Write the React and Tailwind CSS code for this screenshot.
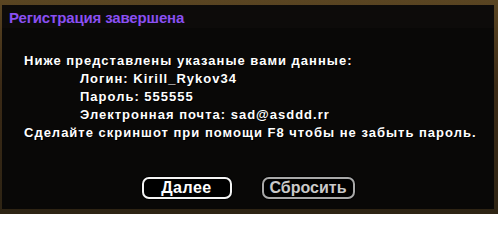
export default function App() {
  const font = { fontFamily: '"Liberation Sans", Arial, sans-serif' };
  return (
    <div
      className="w-[498px] h-[214px] overflow-hidden bg-[linear-gradient(180deg,#5a4522_0%,#3b2a16_40%,#2e2414_100%)] pt-[5px] pl-[2px] pr-[4px] pb-[5px] flex"
      style={font}
    >
      <div className="flex-1 flex flex-col bg-[#0a0908]">
        <div className="h-[23px] bg-[#0d0b0a] pl-[7px] flex items-center">
          <span className="text-[15px] leading-none font-bold tracking-[-0.15px] text-[#8a4ff2] pt-[1px]">Регистрация завершена</span>
        </div>
        <div className="flex-1 flex flex-col pt-[24px] pl-[22px] bg-[#090807]">
          <div className="text-[13px] leading-[18px] font-bold tracking-[1px] text-white [text-shadow:1px_1px_0_#000]">
            <div>Ниже представлены указаные вами данные:</div>
            <div className="pl-[56px]">Логин: Kirill_Rykov34</div>
            <div className="pl-[56px]">Пароль: 555555</div>
            <div className="pl-[56px]">Электронная почта: sad@asddd.rr</div>
            <div>Сделайте скриншот при помощи F8 чтобы не забыть пароль.</div>
          </div>
          <div className="flex justify-center gap-[30px] mt-[35px] pr-[22px]">
            <div className="w-[90px] h-[22px] rounded-[7px] border-2 border-[#f4f4f4] bg-black flex items-center justify-center shadow-[0_0_0_1px_#000]">
              <span className="text-[16px] leading-none font-bold tracking-[0.5px] text-white [text-shadow:1px_1px_0_#000]">Далее</span>
            </div>
            <div className="w-[93px] h-[22px] rounded-[7px] border-2 border-[#a8a8a8] bg-black flex items-center justify-center shadow-[0_0_0_1px_#000]">
              <span className="text-[16px] leading-none font-bold text-[#c9c9c9] [text-shadow:1px_1px_0_#000]">Сбросить</span>
            </div>
          </div>
        </div>
      </div>
    </div>
  );
}
